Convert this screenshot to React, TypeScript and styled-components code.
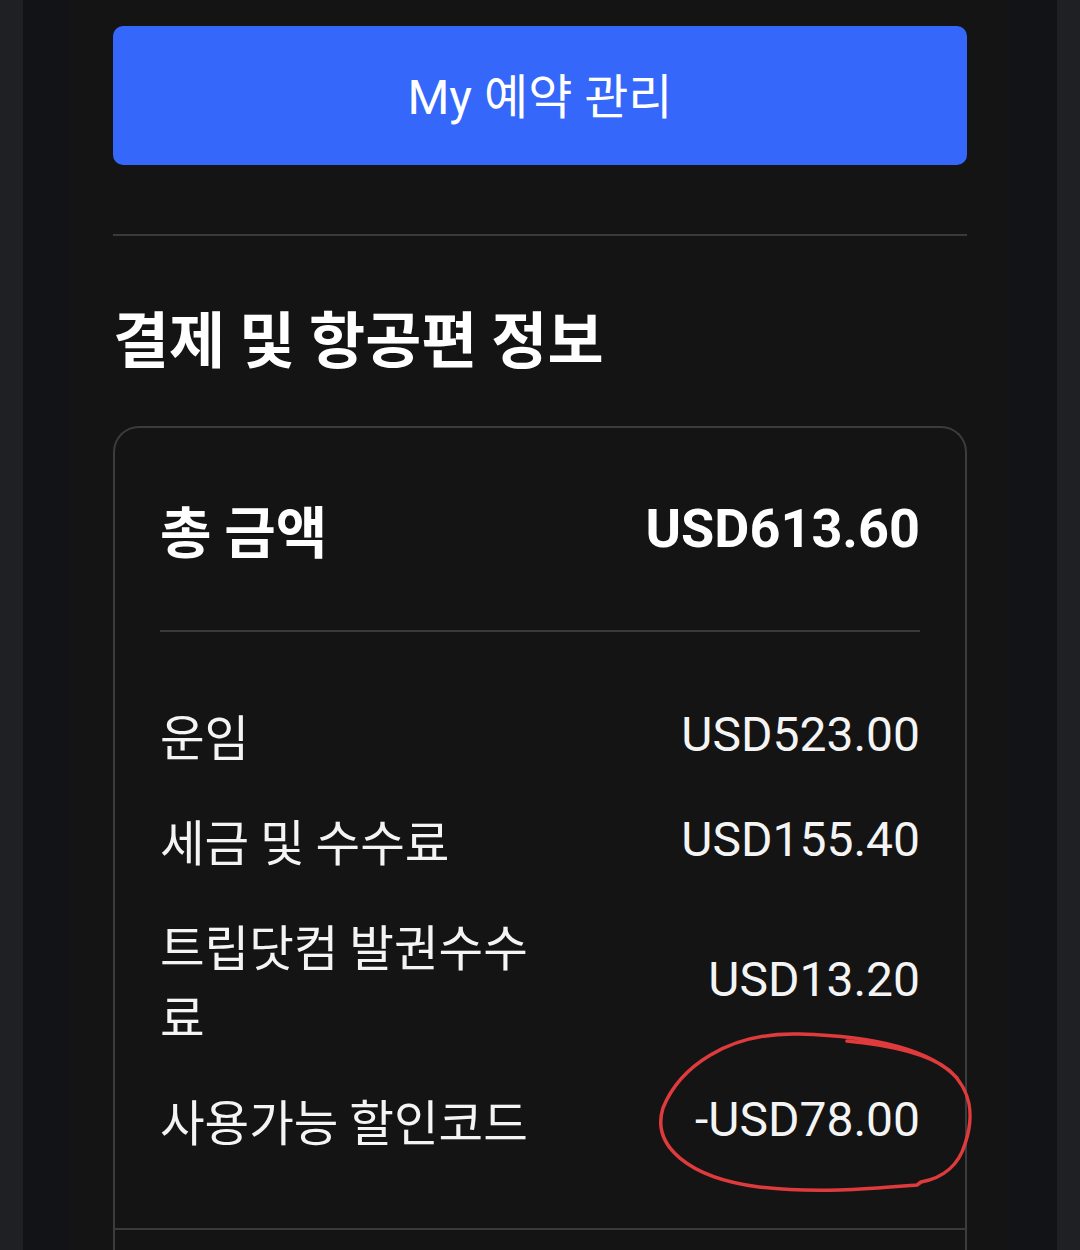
import React from "react";
import styled, { createGlobalStyle } from "styled-components";

const GlobalStyle = createGlobalStyle`
  html, body {
    margin: 0;
    padding: 0;
    background: #1f2024;
  }
  body {
    font-family: Roboto, "Noto Sans CJK KR", "Noto Sans", sans-serif;
    color: #ffffff;
    -webkit-font-smoothing: antialiased;
  }
`;

const Shell = styled.div`
  padding: 0 23px;
  min-height: 1250px;
  background: #1f2024;
`;

const Frame = styled.div`
  background: #121317;
  padding: 0 47px 0 45px;
  min-height: 1250px;
`;

const Main = styled.main`
  background: #141414;
  padding: 26px 43px 0 45px;
  min-height: 1250px;
  display: flex;
  flex-direction: column;
`;

const ManageButton = styled.button`
  height: 139px;
  padding: 0 0 6px;
  border: none;
  border-radius: 10px;
  background: #3467fa;
  color: #ffffff;
  font-family: Roboto, "Noto Sans CJK KR", sans-serif;
  font-size: 48px;
  font-weight: 400;
  cursor: pointer;
`;

const Rule = styled.hr<{ $top?: number }>`
  margin: ${(p) => p.$top ?? 0}px 0 0;
  border: none;
  height: 2px;
  background: #3a3a3a;
`;

const SectionTitle = styled.h2`
  margin: 68px 0 0;
  font-family: "Noto Sans CJK KR", sans-serif;
  font-size: 61px;
  line-height: 66px;
  font-weight: 700;
  color: #ffffff;
`;

const Card = styled.section`
  margin-top: 56px;
  border: 2px solid #3c3c3c;
  border-bottom: none;
  border-radius: 26px 26px 0 0;
  display: flex;
  flex-direction: column;
`;

const CardInner = styled.div`
  padding: 0 45px;
`;

const TotalRow = styled.div`
  display: flex;
  justify-content: space-between;
  align-items: center;
  padding: 70px 0;
  line-height: 62px;
`;

const TotalLabel = styled.span`
  font-family: "Noto Sans CJK KR", sans-serif;
  font-size: 56px;
  font-weight: 700;
`;

const TotalValue = styled.span`
  font-family: Roboto, sans-serif;
  font-size: 54px;
  font-weight: 700;
`;

const Breakdown = styled.div`
  display: flex;
  flex-direction: column;
  gap: 35px;
  padding: 68px 0 73px;
`;

const Row = styled.div`
  display: flex;
  justify-content: space-between;
  align-items: center;
`;

const Label = styled.span`
  max-width: 385px;
  font-family: "Noto Sans CJK KR", sans-serif;
  font-size: 48.5px;
  line-height: 70px;
  color: #f4f4f4;
`;

const Value = styled.span`
  position: relative;
  font-family: Roboto, sans-serif;
  font-size: 48px;
  line-height: 70px;
  color: #f4f4f4;
  white-space: nowrap;
`;

const Circle = styled.svg`
  position: absolute;
  right: -55px;
  top: 50%;
  margin-top: -92px;
  width: 320px;
  height: 170px;
  pointer-events: none;
  overflow: visible;
`;

const CardFooter = styled.div`
  height: 80px;
`;

const rows = [
  { label: "운임", value: "USD523.00" },
  { label: "세금 및 수수료", value: "USD155.40" },
  { label: "트립닷컴 발권수수료", value: "USD13.20" },
];

export default function App() {
  return (
    <>
      <GlobalStyle />
      <Shell>
        <Frame>
          <Main>
            <ManageButton>My 예약 관리</ManageButton>
            <Rule $top={69} />
            <SectionTitle>결제 및 항공편 정보</SectionTitle>
            <Card>
              <CardInner>
                <TotalRow>
                  <TotalLabel>총 금액</TotalLabel>
                  <TotalValue>USD613.60</TotalValue>
                </TotalRow>
                <Rule />
                <Breakdown>
                  {rows.map((r) => (
                    <Row key={r.label}>
                      <Label>{r.label}</Label>
                      <Value>{r.value}</Value>
                    </Row>
                  ))}
                  <Row>
                    <Label>사용가능 할인코드</Label>
                    <Value>
                      -USD78.00
                      <Circle viewBox="656 1032 320 170">
                        <path
                          d="M 958 1082 C 930 1052, 872 1040, 800 1038 C 728 1036, 680 1072, 664 1112 C 652 1150, 690 1182, 760 1191 C 820 1198, 880 1192, 918 1189 L 922 1186 C 945 1182, 960 1168, 966 1148 C 976 1118, 972 1094, 950 1074 C 930 1058, 890 1049, 848 1045"
                          fill="none"
                          stroke="#e03b3c"
                          strokeWidth="3.5"
                          strokeLinecap="round"
                          strokeLinejoin="round"
                        />
                      </Circle>
                    </Value>
                  </Row>
                </Breakdown>
              </CardInner>
              <Rule />
              <CardFooter />
            </Card>
          </Main>
        </Frame>
      </Shell>
    </>
  );
}
